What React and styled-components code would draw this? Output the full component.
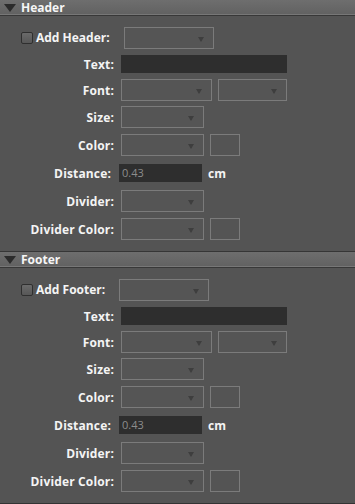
import styled, { createGlobalStyle } from "styled-components";

const GlobalStyle = createGlobalStyle`
	html, body {
		margin: 0;
		padding: 0;
		background: #545454;
	}
	body {
		font-family: "Open Sans", "Liberation Sans", sans-serif;
		font-size: 12px;
		color: #f4f4f4;
	}
`;

const Panel = styled.div`
	width: 355px;
	display: flex;
	flex-direction: column;
	border-bottom: 1px solid #333;
`;

const Bar = styled.div`
	height: 15px;
	display: flex;
	align-items: center;
	gap: 5px;
	padding-left: 4px;
	background: linear-gradient(#6e6e6e, #616161);
	border-top: ${(p) => (p.$first ? "none" : "1px solid #363636")};
	border-bottom: 1px solid #383838;
	box-shadow: inset 0 -1px 0 #777;
	font-weight: bold;
	color: #f6f6f6;
	line-height: 15px;
`;

const Body = styled.div`
	padding: 8px 0;
	display: flex;
	flex-direction: column;
`;

const Row = styled.div`
	display: grid;
	grid-template-columns: 114px auto;
	column-gap: 7px;
	align-items: center;
	height: ${(p) => p.$h}px;
`;

const Label = styled.span`
	text-align: right;
	font-weight: bold;
	white-space: nowrap;
	letter-spacing: 0.15px;
	padding-right: ${(p) => p.$pad || 0}px;
`;

const Fields = styled.div`
	display: flex;
	align-items: center;
	gap: 6px;
`;

const CheckRow = styled.div`
	display: flex;
	align-items: center;
	height: 27px;
	padding-left: 21px;
`;

const Check = styled.span`
	width: 12px;
	height: 12px;
	box-sizing: border-box;
	border: 1px solid #2f2f2f;
	border-radius: 2px;
	background: linear-gradient(#6a6a6a, #575757);
	margin-right: 3px;
`;

const CheckText = styled.span`
	font-weight: bold;
	margin-right: ${(p) => p.$gap}px;
`;

const SelectBox = styled.div`
	position: relative;
	width: ${(p) => p.$w}px;
	height: 22px;
	box-sizing: border-box;
	border: 1px solid #7b7b7b;
	background: #555;

	&::after {
		content: "";
		position: absolute;
		right: 9px;
		top: 9px;
		border-left: 3.5px solid transparent;
		border-right: 3.5px solid transparent;
		border-top: 5px solid #3e3e3e;
	}
`;

const Swatch = styled.div`
	width: 30px;
	height: 22px;
	box-sizing: border-box;
	border: 1px solid #7b7b7b;
`;

const TextField = styled.div`
	width: ${(p) => p.$w}px;
	height: 18px;
	box-sizing: border-box;
	background: #2e2e2e;
	color: #8c8c8c;
	padding-left: 3px;
	font-size: 11px;
	line-height: 18px;
	margin-left: ${(p) => p.$shift || 0}px;
`;

const Unit = styled.span`
	font-weight: bold;
`;

function Triangle() {
	return (
		<svg width="12" height="9" viewBox="0 0 12 9">
			<polygon points="0,1 12,1 6,9" fill="#2b2b2b" />
		</svg>
	);
}

function Section({ title, first, gap }) {
	return (
		<section>
			<Bar $first={first}>
				<Triangle />
				<span>{title}</span>
			</Bar>
			<Body>
				<CheckRow>
					<Check />
					<CheckText $gap={gap}>Add {title}:</CheckText>
					<SelectBox $w={90} />
				</CheckRow>
				<Row $h={26}>
					<Label>Text:</Label>
					<TextField $w={166} />
				</Row>
				<Row $h={26}>
					<Label>Font:</Label>
					<Fields>
						<SelectBox $w={91} />
						<SelectBox $w={69} />
					</Fields>
				</Row>
				<Row $h={28}>
					<Label>Size:</Label>
					<SelectBox $w={83} />
				</Row>
				<Row $h={28}>
					<Label>Color:</Label>
					<Fields>
						<SelectBox $w={83} />
						<Swatch />
					</Fields>
				</Row>
				<Row $h={28}>
					<Label $pad={3}>Distance:</Label>
					<Fields>
						<TextField $w={83} $shift={-2}>0.43</TextField>
						<Unit>cm</Unit>
					</Fields>
				</Row>
				<Row $h={28}>
					<Label>Divider:</Label>
					<SelectBox $w={83} />
				</Row>
				<Row $h={28}>
					<Label>Divider Color:</Label>
					<Fields>
						<SelectBox $w={83} />
						<Swatch />
					</Fields>
				</Row>
			</Body>
		</section>
	);
}

export default function App() {
	return (
		<>
			<GlobalStyle />
			<Panel>
				<Section title="Header" first gap={14} />
				<Section title="Footer" gap={14} />
			</Panel>
		</>
	);
}
